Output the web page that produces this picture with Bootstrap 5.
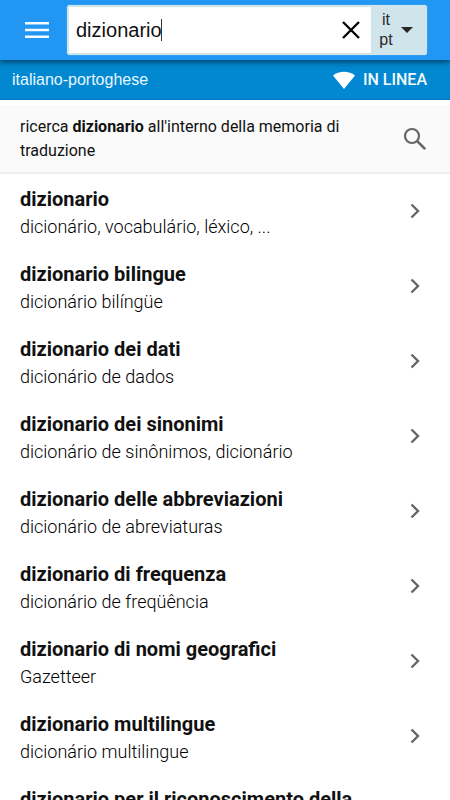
<!DOCTYPE html>
<html lang="it">
<head>
<meta charset="utf-8">
<meta name="viewport" content="width=device-width, initial-scale=1">
<title>dizionario</title>
<link href="https://cdn.jsdelivr.net/npm/bootstrap@5.3.0/dist/css/bootstrap.min.css" rel="stylesheet">
<style>
body { font-family: Roboto, "Liberation Sans", sans-serif; color: #111; background: #fff; }
.topbar { background: #2196f3; height: 60px; padding: 5px 23px 5px 20px; box-shadow: 0 2px 6px rgba(0,0,0,.55); z-index: 2; }
.menu-btn { width: 34px; height: 34px; }
.searchbox { background: #d0e4ec; border-radius: 3px; padding: 2px 0 2px 2px; height: 50px; margin-left: 13px; box-shadow: 0 0 1px #d0e4ec; }
.searchfield { background: #fff; }
.searchfield input { font: 20px/24px "Liberation Sans", Arial, sans-serif; color: #111; padding: 0 0 0 7px; outline: 0;
  background: linear-gradient(#333, #333) 92px center / 1px 22px no-repeat; }
.clear-btn { width: 40px; }
.lang-btn { width: 56px; font: 16px/20px "Liberation Sans", Arial, sans-serif; color: #2a2a2a; }
.lang-pair { width: 30px; }
.statusbar { background: #0288d1; height: 40px; padding: 0 23px 0 12px; font-size: 16px; line-height: 20px; border-bottom: 1px solid #0277cc; }
.pair-name { font-family: "Liberation Sans", Arial, sans-serif; color: #e8f6ff; }
.online { color: #f2faff; font-weight: 500; gap: 8px; }
.memory { background: #fafafa; margin-top: 5px; padding: 10px 23px 9px 20px; font-size: 16px; line-height: 24px; border-bottom: 2px solid #f0f0f0; }
.results { scrollbar-width: none; }
.results::-webkit-scrollbar { display: none; }
.entry { padding: 12px 23px 9px 20px; line-height: 27px; color: #111; }
.entry-title { font-size: 20px; font-weight: 700; }
.entry-sub { font-size: 18px; font-weight: 300; color: #000; }
.chev { margin: 0 7px 4px 0; }
</style>
<script src="https://cdn.jsdelivr.net/npm/bootstrap@5.3.0/dist/js/bootstrap.bundle.min.js"></script>
</head>
<body>
<div class="d-flex flex-column vh-100 overflow-hidden">
  <header class="topbar d-flex align-items-center flex-shrink-0 position-relative">
    <button type="button" class="menu-btn btn p-0 border-0 d-flex align-items-center justify-content-center flex-shrink-0" aria-label="Menu">
      <svg width="24" height="18" viewBox="0 0 24 18" fill="#f4faff" aria-hidden="true"><path d="M0 1h24v2.6H0zM0 7.7h24v2.6H0zM0 14.4h24V17H0z"/></svg>
    </button>
    <form class="searchbox d-flex flex-grow-1" role="search">
      <div class="searchfield d-flex flex-grow-1">
        <input type="text" class="flex-grow-1 border-0 w-100" value="dizionario" aria-label="Cerca">
        <button type="reset" class="clear-btn btn p-0 border-0 rounded-0 d-flex align-items-center justify-content-center flex-shrink-0" aria-label="Cancella">
          <svg width="18" height="18" viewBox="0 0 18 18" fill="none" stroke="#000" stroke-width="2.3" aria-hidden="true"><path d="M1 1l16 16M17 1L1 17"/></svg>
        </button>
      </div>
      <button type="button" class="lang-btn btn p-0 border-0 d-flex align-items-center flex-shrink-0" aria-label="Lingue: it pt">
        <span class="lang-pair text-center">it<br>pt</span>
        <svg width="12" height="6" viewBox="0 0 12 6" fill="#2b2727" aria-hidden="true"><path d="M0 0h12L6 6z"/></svg>
      </button>
    </form>
  </header>
  <div class="statusbar d-flex align-items-center justify-content-between flex-shrink-0">
    <span class="pair-name">italiano-portoghese</span>
    <span class="online d-flex align-items-center">
      <svg width="22" height="18" viewBox="0 0 22 18" fill="#fff" aria-hidden="true"><path d="M0 4.4C6 -.6 16 -.6 22 4.4L11 18z"/></svg>
      IN LINEA
    </span>
  </div>
  <main class="results flex-grow-1 overflow-auto">
    <a href="#" class="memory d-flex align-items-center text-decoration-none text-reset">
      <span class="flex-grow-1 pe-5">ricerca <b>dizionario</b> all'interno della memoria di traduzione</span>
      <svg class="flex-shrink-0" width="24" height="24" viewBox="0 0 24 24" fill="none" stroke="#666" aria-hidden="true"><circle cx="9" cy="9" r="7" stroke-width="2.2"/><path d="M14.2 14.2l8 8" stroke-width="2.6"/></svg>
    </a>
    <nav class="d-flex flex-column" aria-label="Risultati">
      <a href="#" class="entry d-flex align-items-center text-decoration-none"><span class="flex-grow-1"><span class="entry-title d-block">dizionario</span><span class="entry-sub d-block">dicionário, vocabulário, léxico, ...</span></span><svg class="chev flex-shrink-0" width="10" height="16" viewBox="0 0 10 16" fill="none" stroke="#666" stroke-width="2.4" aria-hidden="true"><path d="M1.5 1.5L8 8l-6.500 6.500"/></svg></a>
      <a href="#" class="entry d-flex align-items-center text-decoration-none"><span class="flex-grow-1"><span class="entry-title d-block">dizionario bilingue</span><span class="entry-sub d-block">dicionário bilíngüe</span></span><svg class="chev flex-shrink-0" width="10" height="16" viewBox="0 0 10 16" fill="none" stroke="#666" stroke-width="2.4" aria-hidden="true"><path d="M1.5 1.5L8 8l-6.500 6.500"/></svg></a>
      <a href="#" class="entry d-flex align-items-center text-decoration-none"><span class="flex-grow-1"><span class="entry-title d-block">dizionario dei dati</span><span class="entry-sub d-block">dicionário de dados</span></span><svg class="chev flex-shrink-0" width="10" height="16" viewBox="0 0 10 16" fill="none" stroke="#666" stroke-width="2.4" aria-hidden="true"><path d="M1.5 1.5L8 8l-6.500 6.500"/></svg></a>
      <a href="#" class="entry d-flex align-items-center text-decoration-none"><span class="flex-grow-1"><span class="entry-title d-block">dizionario dei sinonimi</span><span class="entry-sub d-block">dicionário de sinônimos, dicionário</span></span><svg class="chev flex-shrink-0" width="10" height="16" viewBox="0 0 10 16" fill="none" stroke="#666" stroke-width="2.4" aria-hidden="true"><path d="M1.5 1.5L8 8l-6.500 6.500"/></svg></a>
      <a href="#" class="entry d-flex align-items-center text-decoration-none"><span class="flex-grow-1"><span class="entry-title d-block">dizionario delle abbreviazioni</span><span class="entry-sub d-block">dicionário de abreviaturas</span></span><svg class="chev flex-shrink-0" width="10" height="16" viewBox="0 0 10 16" fill="none" stroke="#666" stroke-width="2.4" aria-hidden="true"><path d="M1.5 1.5L8 8l-6.500 6.500"/></svg></a>
      <a href="#" class="entry d-flex align-items-center text-decoration-none"><span class="flex-grow-1"><span class="entry-title d-block">dizionario di frequenza</span><span class="entry-sub d-block">dicionário de freqüência</span></span><svg class="chev flex-shrink-0" width="10" height="16" viewBox="0 0 10 16" fill="none" stroke="#666" stroke-width="2.4" aria-hidden="true"><path d="M1.5 1.5L8 8l-6.500 6.500"/></svg></a>
      <a href="#" class="entry d-flex align-items-center text-decoration-none"><span class="flex-grow-1"><span class="entry-title d-block">dizionario di nomi geografici</span><span class="entry-sub d-block">Gazetteer</span></span><svg class="chev flex-shrink-0" width="10" height="16" viewBox="0 0 10 16" fill="none" stroke="#666" stroke-width="2.4" aria-hidden="true"><path d="M1.5 1.5L8 8l-6.500 6.500"/></svg></a>
      <a href="#" class="entry d-flex align-items-center text-decoration-none"><span class="flex-grow-1"><span class="entry-title d-block">dizionario multilingue</span><span class="entry-sub d-block">dicionário multilingue</span></span><svg class="chev flex-shrink-0" width="10" height="16" viewBox="0 0 10 16" fill="none" stroke="#666" stroke-width="2.4" aria-hidden="true"><path d="M1.5 1.5L8 8l-6.500 6.500"/></svg></a>
      <a href="#" class="entry d-flex align-items-center text-decoration-none"><span class="entry-title">dizionario per il riconoscimento della</span></a>
    </nav>
  </main>
</div>
</body>
</html>
